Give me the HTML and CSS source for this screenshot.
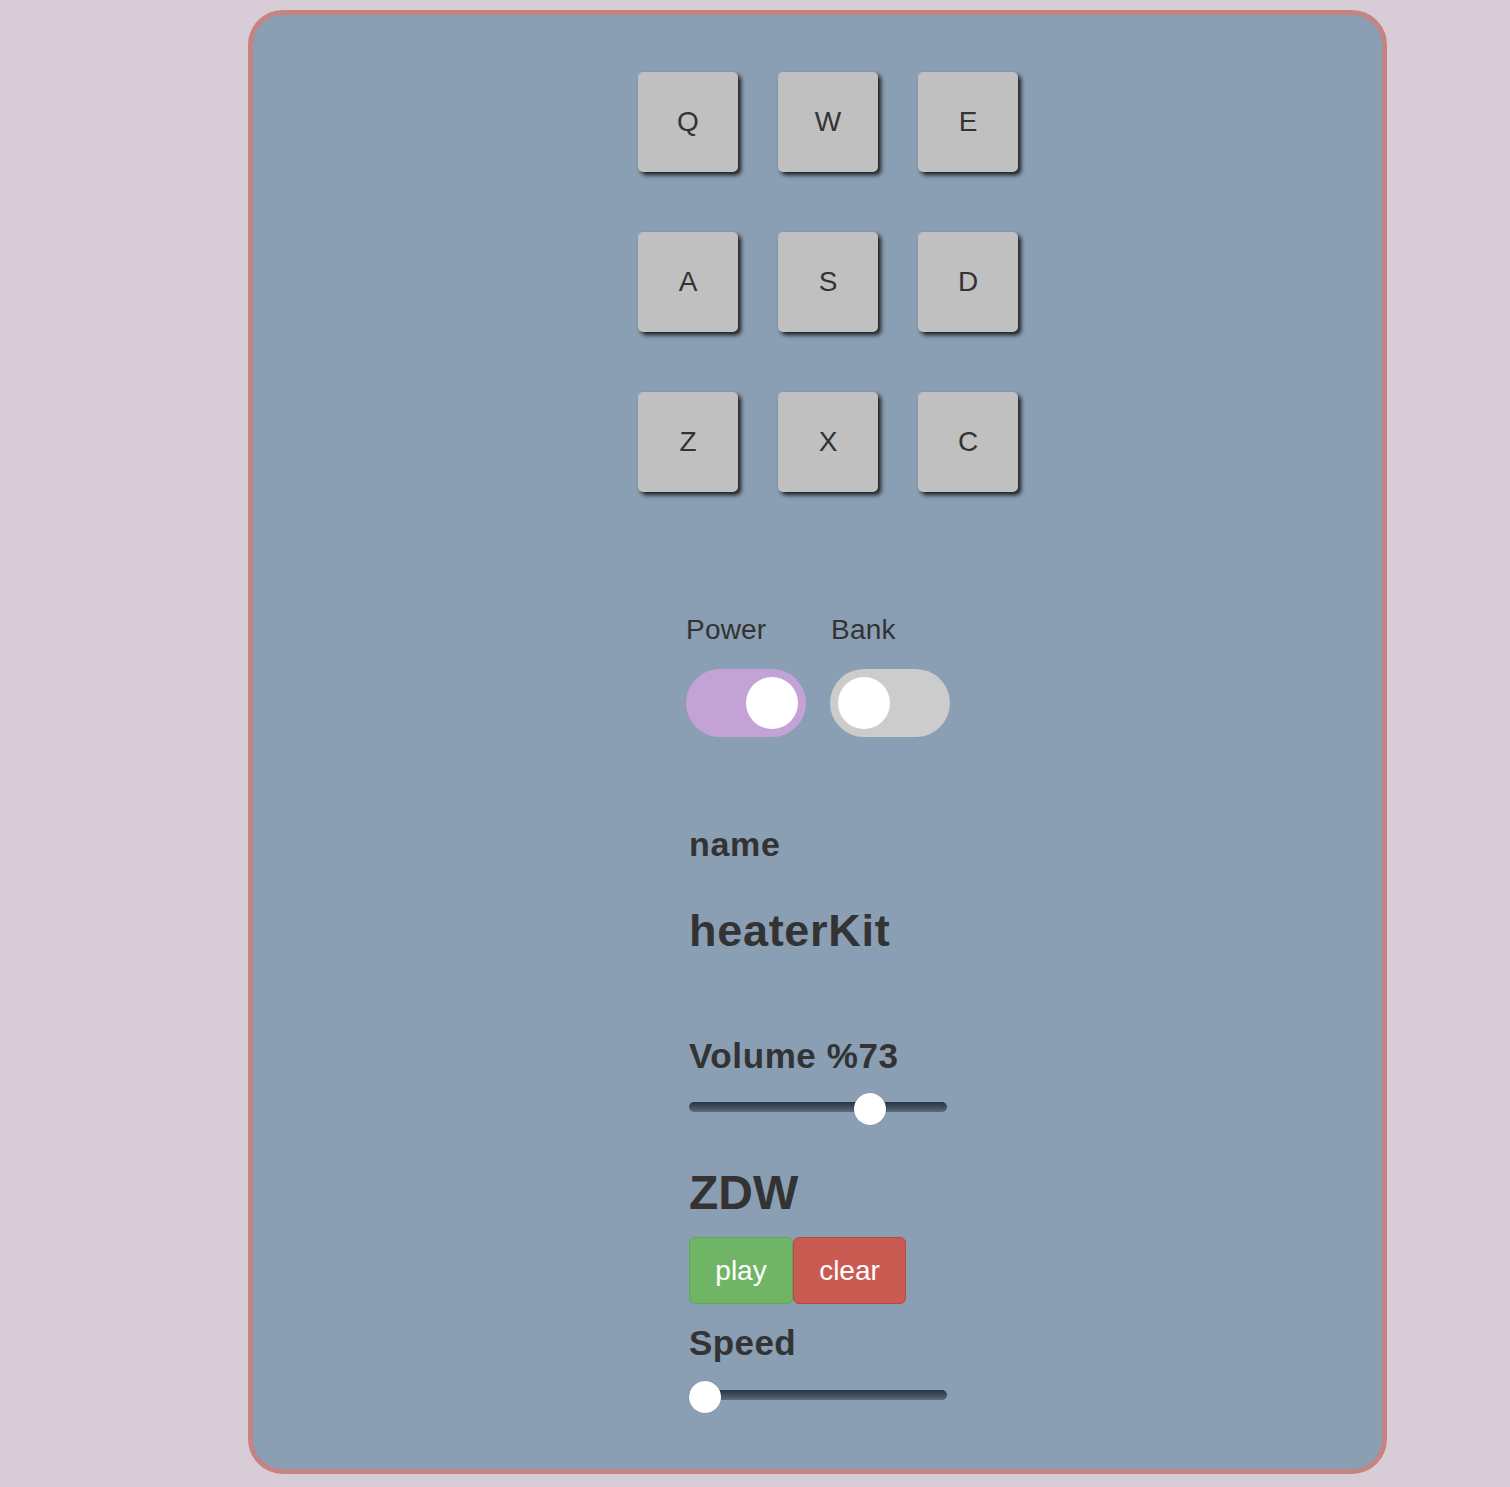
FILE: index.html
```html
<!DOCTYPE html>
<html lang="en">
<head>
<meta charset="utf-8">
<title>Drum Machine</title>
<link rel="stylesheet" href="styles.css">
</head>
<body>
<div class="machine">
  <div class="pads">
    <div class="pad">Q</div>
    <div class="pad">W</div>
    <div class="pad">E</div>
    <div class="pad">A</div>
    <div class="pad">S</div>
    <div class="pad">D</div>
    <div class="pad">Z</div>
    <div class="pad">X</div>
    <div class="pad">C</div>
  </div>

  <div class="switches">
    <div class="switch-group">
      <div class="switch-label">Power</div>
      <div class="toggle toggle-on"><span class="knob"></span></div>
    </div>
    <div class="switch-group">
      <div class="switch-label">Bank</div>
      <div class="toggle toggle-off"><span class="knob"></span></div>
    </div>
  </div>

  <div class="panel">
    <div class="name-label">name</div>
    <div class="name-value">heaterKit</div>
    <div class="volume-label">Volume %73</div>
    <div class="slider slider-volume">
      <div class="track"></div>
      <div class="thumb" style="left: 165px;"></div>
    </div>
    <div class="sequence">ZDW</div>
    <div class="buttons">
      <button class="btn btn-play">play</button>
      <button class="btn btn-clear">clear</button>
    </div>
    <div class="speed-label">Speed</div>
    <div class="slider slider-speed">
      <div class="track"></div>
      <div class="thumb" style="left: 0px;"></div>
    </div>
  </div>
</div>
</body>
</html>
```

FILE: styles.css
```css
html, body {
  margin: 0;
  padding: 0;
  background: #d8cdd6;
}

body {
  font-family: "Liberation Sans", Arial, Helvetica, sans-serif;
  color: #333333;
  padding: 10px 0 14px 248px;
}

.machine {
  width: 1129px;
  box-sizing: content-box;
  background: #8a9eb4;
  border: 5px solid #c48482;
  border-radius: 35px;
  padding: 57px 0 56px 0;
}

.pads {
  margin-left: 385px;
  display: grid;
  grid-template-columns: repeat(3, 100px);
  grid-auto-rows: 100px;
  gap: 60px 40px;
}

.pad {
  background: #c0c0c0;
  border-radius: 5px;
  box-shadow: 3px 3px 4px #1c1c1c;
  display: flex;
  align-items: center;
  justify-content: center;
  font-size: 28px;
  color: #333333;
}

.switches {
  margin-left: 433px;
  margin-top: 122px;
  display: flex;
  gap: 24px;
}

.switch-group {
  display: flex;
  flex-direction: column;
  width: 120px;
}

.switch-label {
  font-size: 28px;
  line-height: 32px;
  height: 32px;
  margin-bottom: 23px;
  letter-spacing: 0.2px;
}

.switch-group + .switch-group .switch-label {
  margin-left: 1px;
}

.toggle {
  width: 120px;
  height: 68px;
  border-radius: 34px;
  box-sizing: border-box;
  padding: 8px;
  display: flex;
}

.toggle-on {
  background: #c3a3d6;
  justify-content: flex-end;
}

.toggle-off {
  background: #cccccc;
  justify-content: flex-start;
}

.knob {
  width: 52px;
  height: 52px;
  border-radius: 50%;
  background: #ffffff;
}

.panel {
  margin-left: 436px;
  margin-top: 88px;
  display: flex;
  flex-direction: column;
  align-items: flex-start;
}

.name-label {
  font-size: 34px;
  font-weight: bold;
  line-height: 39px;
  letter-spacing: 0.7px;
}

.name-value {
  font-size: 45px;
  font-weight: bold;
  line-height: 52px;
  margin-top: 41px;
  letter-spacing: 0.7px;
}

.volume-label {
  font-size: 35px;
  font-weight: bold;
  line-height: 40px;
  margin-top: 79px;
  letter-spacing: 0.6px;
}

.slider {
  position: relative;
  width: 258px;
  height: 32px;
}

.slider-volume {
  margin-top: 17px;
}

.slider-speed {
  margin-top: 18px;
}

.track {
  position: absolute;
  left: 0;
  right: 0;
  top: 9px;
  height: 10px;
  border-radius: 5px;
  background: linear-gradient(to bottom, #2a3442 0%, #3f4c5d 50%, #5d6d82 100%);
}

.thumb {
  position: absolute;
  top: 0;
  width: 32px;
  height: 32px;
  border-radius: 50%;
  background: #ffffff;
  box-shadow: 0 0 1px rgba(0, 0, 0, 0.3);
}

.sequence {
  font-size: 48px;
  font-weight: bold;
  line-height: 55px;
  margin-top: 40px;
}

.buttons {
  display: flex;
  margin-top: 17px;
}

.btn {
  font-family: "Liberation Sans", Arial, Helvetica, sans-serif;
  font-size: 28px;
  color: #ffffff;
  height: 67px;
  padding: 0 25px;
  border-radius: 6px;
  border: 1.5px solid;
  margin: 0;
  cursor: pointer;
}

.btn-play {
  width: 104px;
  background: #6fb565;
  border-color: #5fa856;
}

.btn-clear {
  width: 113px;
  background: #c95b52;
  border-color: #bb4840;
}

.speed-label {
  font-size: 35px;
  font-weight: bold;
  line-height: 40px;
  margin-top: 19px;
  letter-spacing: 0.4px;
}
```
